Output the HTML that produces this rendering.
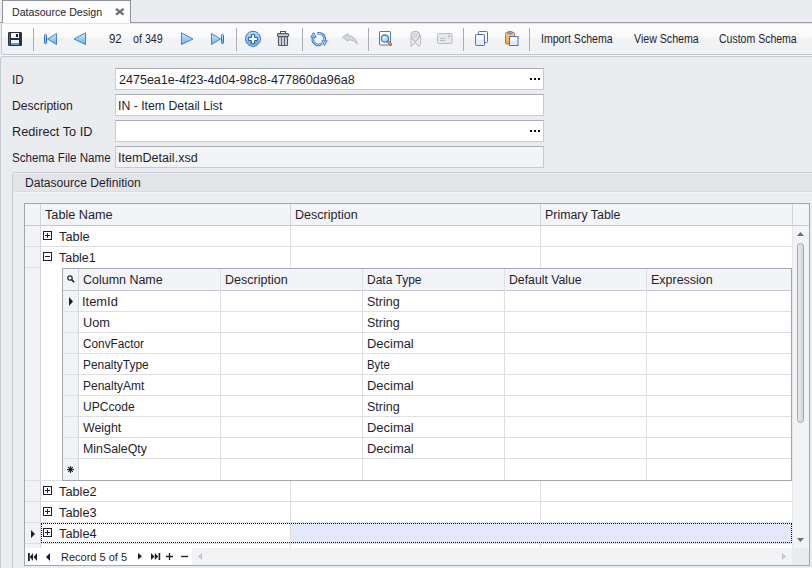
<!DOCTYPE html>
<html><head><meta charset="utf-8">
<style>
*{box-sizing:border-box;margin:0;padding:0}
html,body{width:812px;height:568px;overflow:hidden;background:#EBECEF;font-family:"Liberation Sans",sans-serif;font-size:12px;color:#1F1E2E}
.a{position:absolute}
.t{position:absolute;white-space:nowrap;line-height:14px;transform-origin:0 0}
svg{position:absolute;overflow:visible}
</style></head><body>

<div class="a" style="left:0px;top:22px;width:812px;height:1px;background:#9A9EA8;"></div>
<div class="a" style="left:2px;top:0;width:129px;height:23px;background:#FDFDFD;border:1px solid #8E929C;border-bottom:none"></div>
<svg style="left:115px;top:8px" width="10" height="8" viewBox="0 0 10 8"><path d="M1 0.9 L8.6 6.7 M8.6 0.9 L1 6.7" stroke="#6B6D78" stroke-width="2.3"/></svg>
<div class="a" style="left:1px;top:23px;width:830px;height:32px;border:1px solid #C6C9CF;border-top-color:#E2E3E7;border-bottom-color:#BFC2C8;border-radius:0 0 3px 3px;background:linear-gradient(#FBFBFC 0,#FAFAFB 13px,#F1F2F4 14px,#F1F2F4 100%)"></div>
<div class="a" style="left:0px;top:23px;width:2px;height:1px;background:#E2E3E7;"></div>
<div class="a" style="left:0px;top:55px;width:812px;height:1px;background:#F5F6F8;"></div>
<div class="a" style="left:33px;top:28px;width:1px;height:23px;background:#A9ACB4;"></div>
<div class="a" style="left:236px;top:28px;width:1px;height:23px;background:#A9ACB4;"></div>
<div class="a" style="left:302px;top:28px;width:1px;height:23px;background:#A9ACB4;"></div>
<div class="a" style="left:368px;top:28px;width:1px;height:23px;background:#A9ACB4;"></div>
<div class="a" style="left:463px;top:28px;width:1px;height:23px;background:#A9ACB4;"></div>
<div class="a" style="left:529px;top:28px;width:1px;height:23px;background:#A9ACB4;"></div>
<div class="a" style="left:0;top:56px;width:830px;height:520px;border:1px solid #C6C9CF;border-radius:3px;background:#EBECEF"></div>
<div class="a" style="left:115px;top:68px;width:429px;height:22px;background:#fff;border:1px solid #C9CBD0;border-top-color:#A9ACB3"></div>
<div class="a" style="left:115px;top:94px;width:429px;height:22px;background:#fff;border:1px solid #C9CBD0;border-top-color:#A9ACB3"></div>
<div class="a" style="left:115px;top:120px;width:429px;height:22px;background:#fff;border:1px solid #C9CBD0;border-top-color:#A9ACB3"></div>
<div class="a" style="left:115px;top:146px;width:429px;height:22px;background:#F3F4F6;border:1px solid #C9CBD0;border-top-color:#A9ACB3"></div>
<div class="a" style="left:530px;top:78px;width:2px;height:2px;background:#0A0A14;"></div>
<div class="a" style="left:534px;top:78px;width:2px;height:2px;background:#0A0A14;"></div>
<div class="a" style="left:538px;top:78px;width:2px;height:2px;background:#0A0A14;"></div>
<div class="a" style="left:530px;top:130px;width:2px;height:2px;background:#0A0A14;"></div>
<div class="a" style="left:534px;top:130px;width:2px;height:2px;background:#0A0A14;"></div>
<div class="a" style="left:538px;top:130px;width:2px;height:2px;background:#0A0A14;"></div>
<div class="a" style="left:12px;top:172px;width:820px;height:400px;border:1px solid #C6C9CF;border-radius:3px;background:#ECEDF0;overflow:hidden"><div class="a" style="left:0;top:0;width:820px;height:19px;background:#E3E4E8;border-top:1px solid #EDEEF1;border-bottom:1px solid #DADCE0"></div><div class="a" style="left:0;top:19px;width:820px;height:1px;background:#F3F4F6"></div></div>
<div class="a" style="left:24px;top:203px;width:786px;height:363px;background:#fff;border:1px solid #A2A6AF"></div>
<div class="a" style="left:25px;top:204px;width:784px;height:21px;background:#F3F4F7;"></div>
<div class="a" style="left:25px;top:225px;width:784px;height:1px;background:#C5C8CF;"></div>
<div class="a" style="left:25px;top:226px;width:15px;height:322px;background:#F2F3F5;"></div>
<div class="a" style="left:40px;top:204px;width:1px;height:344px;background:#D3D5DA;"></div>
<div class="a" style="left:290px;top:204px;width:1px;height:21px;background:#D3D5DA;"></div>
<div class="a" style="left:540px;top:204px;width:1px;height:21px;background:#D3D5DA;"></div>
<div class="a" style="left:792px;top:204px;width:1px;height:21px;background:#D3D5DA;"></div>
<div class="a" style="left:793px;top:226px;width:16px;height:322px;background:#F2F3F5;"></div>
<div class="a" style="left:792px;top:226px;width:1px;height:322px;background:#E6E7EA;"></div>
<div class="a" style="left:25px;top:246px;width:767px;height:1px;background:#DDDFE3;"></div>
<div class="a" style="left:290px;top:226px;width:1px;height:21px;background:#DDDFE3;"></div>
<div class="a" style="left:540px;top:226px;width:1px;height:21px;background:#DDDFE3;"></div>
<div class="a" style="left:43px;top:231px;width:9px;height:9px;background:transparent;border:1px solid #1F1E2E"></div>
<div class="a" style="left:45px;top:235px;width:5px;height:1px;background:#1F1E2E;"></div>
<div class="a" style="left:47px;top:233px;width:1px;height:5px;background:#1F1E2E;"></div>
<div class="a" style="left:25px;top:267px;width:15px;height:1px;background:#DDDFE3;"></div>
<div class="a" style="left:290px;top:247px;width:1px;height:21px;background:#DDDFE3;"></div>
<div class="a" style="left:540px;top:247px;width:1px;height:21px;background:#DDDFE3;"></div>
<div class="a" style="left:43px;top:252px;width:9px;height:9px;background:transparent;border:1px solid #1F1E2E"></div>
<div class="a" style="left:45px;top:256px;width:5px;height:1px;background:#1F1E2E;"></div>
<div class="a" style="left:25px;top:501px;width:767px;height:1px;background:#DDDFE3;"></div>
<div class="a" style="left:290px;top:481px;width:1px;height:21px;background:#DDDFE3;"></div>
<div class="a" style="left:540px;top:481px;width:1px;height:21px;background:#DDDFE3;"></div>
<div class="a" style="left:43px;top:486px;width:9px;height:9px;background:transparent;border:1px solid #1F1E2E"></div>
<div class="a" style="left:45px;top:490px;width:5px;height:1px;background:#1F1E2E;"></div>
<div class="a" style="left:47px;top:488px;width:1px;height:5px;background:#1F1E2E;"></div>
<div class="a" style="left:25px;top:522px;width:767px;height:1px;background:#DDDFE3;"></div>
<div class="a" style="left:290px;top:502px;width:1px;height:21px;background:#DDDFE3;"></div>
<div class="a" style="left:540px;top:502px;width:1px;height:21px;background:#DDDFE3;"></div>
<div class="a" style="left:43px;top:507px;width:9px;height:9px;background:transparent;border:1px solid #1F1E2E"></div>
<div class="a" style="left:45px;top:511px;width:5px;height:1px;background:#1F1E2E;"></div>
<div class="a" style="left:47px;top:509px;width:1px;height:5px;background:#1F1E2E;"></div>
<div class="a" style="left:25px;top:543px;width:767px;height:1px;background:#DDDFE3;"></div>
<div class="a" style="left:290px;top:523px;width:1px;height:21px;background:#DDDFE3;"></div>
<div class="a" style="left:540px;top:523px;width:1px;height:21px;background:#DDDFE3;"></div>
<div class="a" style="left:43px;top:528px;width:9px;height:9px;background:transparent;border:1px solid #1F1E2E"></div>
<div class="a" style="left:45px;top:532px;width:5px;height:1px;background:#1F1E2E;"></div>
<div class="a" style="left:47px;top:530px;width:1px;height:5px;background:#1F1E2E;"></div>
<div class="a" style="left:25px;top:480px;width:38px;height:1px;background:#DDDFE3;"></div>
<div class="a" style="left:290px;top:543px;width:1px;height:5px;background:#DDDFE3;"></div>
<div class="a" style="left:540px;top:543px;width:1px;height:5px;background:#DDDFE3;"></div>
<div class="a" style="left:291px;top:523px;width:501px;height:20px;background:#E3E8FA;"></div>
<div class="a" style="left:41px;top:523px;width:751px;height:20px;border:1px dotted #111"></div>
<svg style="left:31px;top:530px" width="5" height="8"><path d="M0 0 L4 4 L0 8 Z" fill="#1F1E2E"/></svg>
<div class="a" style="left:62px;top:268px;width:730px;height:213px;background:#fff;border:1px solid #A2A6AF"></div>
<div class="a" style="left:63px;top:269px;width:728px;height:21px;background:#F3F4F7;"></div>
<div class="a" style="left:63px;top:290px;width:728px;height:1px;background:#C5C8CF;"></div>
<div class="a" style="left:63px;top:291px;width:15px;height:189px;background:#F2F3F5;"></div>
<div class="a" style="left:78px;top:269px;width:1px;height:211px;background:#D3D5DA;"></div>
<div class="a" style="left:220px;top:269px;width:1px;height:211px;background:#DDDFE3;"></div>
<div class="a" style="left:362px;top:269px;width:1px;height:211px;background:#DDDFE3;"></div>
<div class="a" style="left:504px;top:269px;width:1px;height:211px;background:#DDDFE3;"></div>
<div class="a" style="left:646px;top:269px;width:1px;height:211px;background:#DDDFE3;"></div>
<div class="a" style="left:63px;top:311px;width:728px;height:1px;background:#DDDFE3;"></div>
<div class="a" style="left:63px;top:332px;width:728px;height:1px;background:#DDDFE3;"></div>
<div class="a" style="left:63px;top:353px;width:728px;height:1px;background:#DDDFE3;"></div>
<div class="a" style="left:63px;top:374px;width:728px;height:1px;background:#DDDFE3;"></div>
<div class="a" style="left:63px;top:395px;width:728px;height:1px;background:#DDDFE3;"></div>
<div class="a" style="left:63px;top:416px;width:728px;height:1px;background:#DDDFE3;"></div>
<div class="a" style="left:63px;top:437px;width:728px;height:1px;background:#DDDFE3;"></div>
<div class="a" style="left:63px;top:458px;width:728px;height:1px;background:#DDDFE3;"></div>
<svg style="left:69px;top:297px" width="5" height="9"><path d="M0 0 L4 4.5 L0 9 Z" fill="#1F1E2E"/></svg>
<svg style="left:67px;top:275px" width="9" height="9"><circle cx="3" cy="3" r="2.2" fill="none" stroke="#1F1E2E" stroke-width="1.2"/><path d="M4.6 4.6 L7.2 7.2" stroke="#1F1E2E" stroke-width="1.6"/></svg>
<svg style="left:67px;top:466px" width="8" height="8"><path d="M3.5 0 V7 M0 3.5 H7 M1.2 1.2 L5.8 5.8 M5.8 1.2 L1.2 5.8" stroke="#1F1E2E" stroke-width="1.1"/></svg>
<svg style="left:797px;top:232px" width="8" height="4"><path d="M0 4 L3.5 0 L7 4 Z" fill="#6B6F7A"/></svg>
<div class="a" style="left:797px;top:243px;width:7px;height:180px;border:1px solid #A2A6AF;border-radius:4px;background:linear-gradient(90deg,#E6E7EB,#D5D7DD)"></div>
<svg style="left:797px;top:538px" width="8" height="4"><path d="M0 0 L7 0 L3.5 4 Z" fill="#6B6F7A"/></svg>
<div class="a" style="left:25px;top:548px;width:784px;height:17px;background:#FFFFFF;"></div>
<div class="a" style="left:192px;top:548px;width:600px;height:17px;background:#F2F3F5;"></div>
<div class="a" style="left:792px;top:548px;width:17px;height:17px;background:#EAEBEE;"></div>
<svg style="left:28px;top:553px" width="10" height="8"><path d="M0 0 H1.8 V8 H0 Z M5 0 L1.8 4 L5 8 Z M9 0 L5.5 4 L9 8 Z" fill="#1F1E2E"/></svg>
<svg style="left:46px;top:553px" width="5" height="8"><path d="M4 0 L0 4 L4 8 Z" fill="#1F1E2E"/></svg>
<svg style="left:138px;top:553px" width="5" height="7"><path d="M0 0 L4 3.3 L0 6.6 Z" fill="#1F1E2E"/></svg>
<svg style="left:151px;top:553px" width="10" height="8"><path d="M0 0 L3.5 3.5 L0 7 Z M3.8 0 L7.2 3.5 L3.8 7 Z M7.6 0 H9.2 V7 H7.6 Z" fill="#1F1E2E"/></svg>
<svg style="left:166px;top:553px" width="8" height="8"><path d="M3.5 0 V7 M0 3.5 H7" stroke="#1F1E2E" stroke-width="1.3"/></svg>
<svg style="left:181px;top:556px" width="8" height="2"><path d="M0 0.5 H7" stroke="#1F1E2E" stroke-width="1.3"/></svg>
<svg style="left:198px;top:553px" width="5" height="7"><path d="M4 0 L0 3.5 L4 7 Z" fill="#C3C6CC"/></svg>
<svg style="left:782px;top:553px" width="5" height="7"><path d="M0 0 L4 3.5 L0 7 Z" fill="#C3C6CC"/></svg>
<!-- save -->
<svg style="left:8px;top:32px" width="14" height="14" viewBox="0 0 14 14">
<rect x="0" y="0" width="14" height="14" rx="1.2" fill="#2A3140"/>
<rect x="3" y="1" width="8" height="5" fill="#F2F5FB"/>
<rect x="8" y="2" width="2" height="3" fill="#1D2330"/>
<rect x="3" y="8" width="8" height="3" fill="#EEF2FA"/>
<rect x="3" y="11" width="8" height="2" fill="#5A9BE0"/>
<rect x="1" y="1" width="1" height="12" fill="#5A6270"/>
</svg>
<defs></defs>
<svg style="left:0;top:0" width="1" height="1"><defs>
<linearGradient id="gb" x1="0" y1="0" x2="0" y2="1"><stop offset="0" stop-color="#D3EAFB"/><stop offset="1" stop-color="#6AB0EA"/></linearGradient>
<linearGradient id="gc" x1="0" y1="0" x2="0" y2="1"><stop offset="0" stop-color="#B4DAF7"/><stop offset="1" stop-color="#4D92DD"/></linearGradient>
<linearGradient id="gt" x1="0" y1="0" x2="1" y2="0"><stop offset="0" stop-color="#B8BDC8"/><stop offset="0.5" stop-color="#E2E5EB"/><stop offset="1" stop-color="#B8BDC8"/></linearGradient>
<linearGradient id="go" x1="0" y1="0" x2="0" y2="1"><stop offset="0" stop-color="#F6D68A"/><stop offset="1" stop-color="#E2A443"/></linearGradient>
</defs></svg>
<!-- first -->
<svg style="left:44px;top:33px" width="14" height="13" viewBox="0 0 14 13">
<rect x="0.5" y="1.5" width="2" height="9" rx="0.8" fill="url(#gb)" stroke="#3470C4" stroke-width="1"/>
<path d="M3.5 6 L12.5 0.5 V11.5 Z" fill="url(#gb)" stroke="#3A76C8" stroke-width="0.9" stroke-linejoin="round"/>
</svg>
<!-- prev -->
<svg style="left:73px;top:32px" width="14" height="14" viewBox="0 0 14 14">
<path d="M1 7 L12.5 0.8 V12.5 Z" fill="url(#gb)" stroke="#3A76C8" stroke-width="0.9" stroke-linejoin="round"/>
</svg>
<!-- next -->
<svg style="left:181px;top:32px" width="14" height="14" viewBox="0 0 14 14">
<path d="M0.5 0.8 L12 7 L0.5 12.5 Z" fill="url(#gb)" stroke="#3A76C8" stroke-width="0.9" stroke-linejoin="round"/>
</svg>
<!-- last -->
<svg style="left:210px;top:33px" width="15" height="13" viewBox="0 0 15 13">
<path d="M1.5 0.5 L10.5 6 L1.5 11.5 Z" fill="url(#gb)" stroke="#3A76C8" stroke-width="0.9" stroke-linejoin="round"/>
<rect x="11.5" y="1.5" width="2" height="9" rx="0.8" fill="url(#gb)" stroke="#3470C4" stroke-width="1"/>
</svg>
<!-- add -->
<svg style="left:245px;top:31px" width="17" height="17" viewBox="0 0 17 17">
<circle cx="8" cy="7.8" r="7.5" fill="url(#gc)" stroke="#3A74C4" stroke-width="1"/>
<circle cx="8" cy="8" r="6.3" fill="none" stroke="#C4E1F8" stroke-width="0.8" opacity="0.7"/>
<path d="M6.5 3.6 H9.5 V6.5 H12.4 V9.5 H9.5 V12.4 H6.5 V9.5 H3.6 V6.5 H6.5 Z" fill="#FFFFFF" stroke="#2B63B5" stroke-width="1" stroke-linejoin="miter"/>
</svg>
<!-- trash -->
<svg style="left:277px;top:31px" width="13" height="16" viewBox="0 0 13 16">
<rect x="3.5" y="0.5" width="5" height="2.4" fill="#FFFFFF" stroke="#505563" stroke-width="1"/>
<rect x="1.5" y="5.5" width="9" height="9" rx="1" fill="#CBD4E2" stroke="#505563" stroke-width="1.1"/>
<rect x="0.5" y="2.6" width="11" height="3" rx="1.1" fill="#CDD0D7" stroke="#505563" stroke-width="1.1"/>
<path d="M4.5 6 V14 M7.5 6 V14" stroke="#5C6270" stroke-width="1"/>
</svg>
<!-- refresh -->
<svg style="left:311px;top:32px" width="17" height="15" viewBox="0 0 17 15">
<path d="M2.5 5 A5.5 5.5 0 0 0 11 11.6" fill="none" stroke="#3572C6" stroke-width="2.6"/>
<path d="M2.5 5 A5.5 5.5 0 0 0 11 11.6" fill="none" stroke="#CDE5FA" stroke-width="0.9"/>
<path d="M6.1 1.8 A5.5 5.5 0 0 1 13.5 8.5" fill="none" stroke="#3572C6" stroke-width="2.6"/>
<path d="M6.1 1.8 A5.5 5.5 0 0 1 13.5 8.5" fill="none" stroke="#CDE5FA" stroke-width="0.9"/>
<path d="M2.5 0.6 L5.2 5.2 H-0.2 Z" fill="#A6D2F6" stroke="#3572C6" stroke-width="0.9" stroke-linejoin="round"/>
<path d="M13.5 13.4 L10.8 8.8 H16.2 Z" fill="#A6D2F6" stroke="#3572C6" stroke-width="0.9" stroke-linejoin="round"/>
</svg>
<!-- undo (disabled) -->
<svg style="left:342px;top:33px" width="16" height="12" viewBox="0 0 16 12">
<path d="M0.5 4.2 L6 0.5 V2.6 Q13.5 2.8 15.3 11.3 Q12.5 6.8 6 6.8 V8.3 Z" fill="#D3D6DB" stroke="#B9BCC3" stroke-width="1" stroke-linejoin="round"/>
</svg>
<!-- preview -->
<svg style="left:379px;top:31px" width="14" height="16" viewBox="0 0 14 16">
<rect x="0.5" y="0.5" width="11" height="13.5" rx="0.6" fill="#FFFFFF" stroke="#5677C2" stroke-width="1"/>
<path d="M8.6 10.2 L11.6 13.4" stroke="#9A4A16" stroke-width="2.8" stroke-linecap="round"/>
<path d="M8.6 10.2 L11.4 13.2" stroke="#E8B24E" stroke-width="1.4" stroke-linecap="round"/>
<circle cx="5.9" cy="7.6" r="3.7" fill="#A9D6F6" stroke="#3C6DC0" stroke-width="1.1"/>
<circle cx="5.2" cy="6.8" r="1.6" fill="#DDF0FD"/>
</svg>
<!-- map pin (disabled) -->
<svg style="left:410px;top:30px" width="12" height="18" viewBox="0 0 12 18">
<path d="M1 7 V16.5 L5.3 12.8 L8.8 16.3 L10.6 14.2 V5" fill="#E9EAED" stroke="#B7BAC1" stroke-width="1" stroke-linejoin="round"/>
<path d="M5.3 11.8 C2.2 8.6 1 7 1 5.5 A4.3 4.3 0 0 1 9.6 5.5 C9.6 7 8.4 8.6 5.3 11.8 Z" fill="#E4E5E9" stroke="#B3B6BD" stroke-width="1.1"/>
<circle cx="5.3" cy="5.4" r="1.4" fill="#F3F4F6" stroke="#B3B6BD" stroke-width="0.9"/>
</svg>
<!-- email (disabled) -->
<svg style="left:437px;top:33px" width="16" height="11" viewBox="0 0 16 11">
<rect x="0.5" y="0.5" width="14.5" height="10" rx="1" fill="#E6E7EA" stroke="#B9BCC3" stroke-width="1"/>
<path d="M3 5.5 H8 M3 7.5 H8" stroke="#B9BCC3" stroke-width="1"/>
<rect x="11" y="2" width="2" height="2.5" fill="#C3C6CC"/>
</svg>
<!-- copy -->
<svg style="left:475px;top:31px" width="15" height="16" viewBox="0 0 15 16">
<rect x="3.5" y="0.5" width="9" height="11" rx="0.8" fill="#FFFFFF" stroke="#5472B8" stroke-width="1"/>
<rect x="0.5" y="3.5" width="9" height="11" rx="0.8" fill="#E3EAFA" stroke="#5472B8" stroke-width="1"/>
<rect x="1.5" y="4.5" width="7" height="4" fill="#FFFFFF"/>
</svg>
<!-- paste -->
<svg style="left:505px;top:31px" width="14" height="16" viewBox="0 0 14 16">
<rect x="0.5" y="1.5" width="9" height="11.5" rx="1" fill="url(#go)" stroke="#C27A28" stroke-width="1"/>
<rect x="2.5" y="0.5" width="5" height="2.4" rx="1" fill="#9AA6C2" stroke="#5472B8" stroke-width="0.8"/>
<rect x="4.5" y="5.5" width="8.5" height="9" fill="#E3EAFA" stroke="#5472B8" stroke-width="1"/>
<rect x="5.5" y="6.5" width="6.5" height="3" fill="#FFFFFF"/>
</svg>

<div class="t" style="left:12.00px;top:5px;font-size:11px;transform:scaleX(0.9633);">Datasource Design</div>
<div class="t" style="left:109.00px;top:32px;font-size:12px;transform:scaleX(0.9507);">92</div>
<div class="t" style="left:133.00px;top:32px;font-size:12px;transform:scaleX(0.8905);">of 349</div>
<div class="t" style="left:541.12px;top:32px;font-size:12px;transform:scaleX(0.8799);">Import Schema</div>
<div class="t" style="left:634.00px;top:32px;font-size:12px;transform:scaleX(0.8847);">View Schema</div>
<div class="t" style="left:719.00px;top:32px;font-size:12px;transform:scaleX(0.8762);">Custom Schema</div>
<div class="t" style="left:12.03px;top:73px;font-size:12px;transform:scaleX(0.9705);">ID</div>
<div class="t" style="left:12.00px;top:99px;font-size:12px;transform:scaleX(1.0110);">Description</div>
<div class="t" style="left:12.00px;top:125px;font-size:12px;transform:scaleX(1.0608);">Redirect To ID</div>
<div class="t" style="left:12.00px;top:151px;font-size:12px;transform:scaleX(0.9672);">Schema File Name</div>
<div class="t" style="left:119.00px;top:73px;font-size:12px;transform:scaleX(1.0449);">2475ea1e-4f23-4d04-98c8-477860da96a8</div>
<div class="t" style="left:117.98px;top:99px;font-size:12px;transform:scaleX(1.0227);">IN - Item Detail List</div>
<div class="t" style="left:117.95px;top:151px;font-size:12px;transform:scaleX(1.0491);">ItemDetail.xsd</div>
<div class="t" style="left:25.00px;top:176px;font-size:12px;transform:scaleX(1.0083);">Datasource Definition</div>
<div class="t" style="left:45.00px;top:208px;font-size:12px;transform:scaleX(1.0566);">Table Name</div>
<div class="t" style="left:295.00px;top:208px;font-size:12px;transform:scaleX(1.0447);">Description</div>
<div class="t" style="left:545.00px;top:208px;font-size:12px;transform:scaleX(1.0315);">Primary Table</div>
<div class="t" style="left:59.00px;top:230px;font-size:12px;transform:scaleX(1.0685);">Table</div>
<div class="t" style="left:59.00px;top:251px;font-size:12px;transform:scaleX(1.0368);">Table1</div>
<div class="t" style="left:59.00px;top:485px;font-size:12px;transform:scaleX(1.0648);">Table2</div>
<div class="t" style="left:59.00px;top:506px;font-size:12px;transform:scaleX(1.0648);">Table3</div>
<div class="t" style="left:59.00px;top:527px;font-size:12px;transform:scaleX(1.0648);">Table4</div>
<div class="t" style="left:83.00px;top:273px;font-size:12px;transform:scaleX(1.0387);">Column Name</div>
<div class="t" style="left:225.00px;top:273px;font-size:12px;transform:scaleX(1.0447);">Description</div>
<div class="t" style="left:367.00px;top:273px;font-size:12px;">Data Type</div>
<div class="t" style="left:509.00px;top:273px;font-size:12px;transform:scaleX(1.0212);">Default Value</div>
<div class="t" style="left:651.00px;top:273px;font-size:12px;transform:scaleX(1.0394);">Expression</div>
<div class="t" style="left:81.93px;top:295px;font-size:12px;transform:scaleX(1.0735);">ItemId</div>
<div class="t" style="left:367.00px;top:295px;font-size:12px;transform:scaleX(1.0432);">String</div>
<div class="t" style="left:83.00px;top:316px;font-size:12px;transform:scaleX(1.0655);">Uom</div>
<div class="t" style="left:367.00px;top:316px;font-size:12px;transform:scaleX(1.0432);">String</div>
<div class="t" style="left:83.00px;top:337px;font-size:12px;transform:scaleX(0.9835);">ConvFactor</div>
<div class="t" style="left:367.00px;top:337px;font-size:12px;transform:scaleX(1.0779);">Decimal</div>
<div class="t" style="left:83.00px;top:358px;font-size:12px;transform:scaleX(0.9945);">PenaltyType</div>
<div class="t" style="left:367.00px;top:358px;font-size:12px;transform:scaleX(0.9450);">Byte</div>
<div class="t" style="left:83.00px;top:379px;font-size:12px;">PenaltyAmt</div>
<div class="t" style="left:367.00px;top:379px;font-size:12px;transform:scaleX(1.0779);">Decimal</div>
<div class="t" style="left:83.00px;top:400px;font-size:12px;transform:scaleX(1.0061);">UPCcode</div>
<div class="t" style="left:367.00px;top:400px;font-size:12px;transform:scaleX(1.0432);">String</div>
<div class="t" style="left:83.00px;top:421px;font-size:12px;transform:scaleX(1.0318);">Weight</div>
<div class="t" style="left:367.00px;top:421px;font-size:12px;transform:scaleX(1.0779);">Decimal</div>
<div class="t" style="left:83.00px;top:442px;font-size:12px;transform:scaleX(1.0319);">MinSaleQty</div>
<div class="t" style="left:367.00px;top:442px;font-size:12px;transform:scaleX(1.0779);">Decimal</div>
<div class="t" style="left:61.00px;top:550px;font-size:11px;">Record 5 of 5</div>
</body></html>
